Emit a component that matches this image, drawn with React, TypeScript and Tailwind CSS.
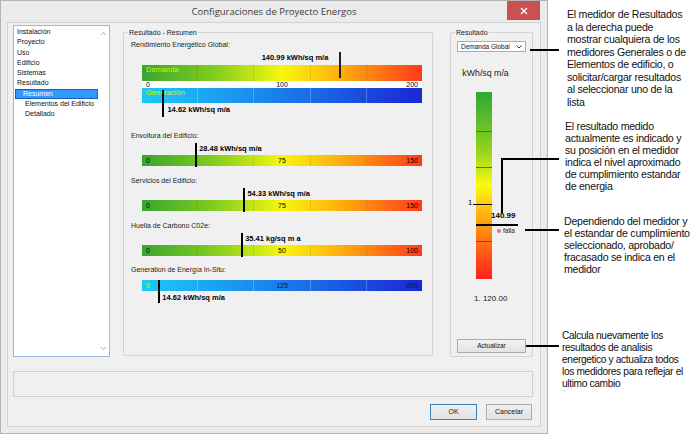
import React from "react";

const warm =
  "bg-[linear-gradient(to_right,#37a52f_0%,#86cf1e_27%,#f6f70f_50%,#ffb20e_70%,#ff3a1b_100%)]";
const cool =
  "bg-[linear-gradient(to_right,#1ccaf6_0%,#1a9cf0_30%,#1a6ce6_60%,#1a3fdc_85%,#1a28d6_100%)]";

function Segments({ light }: { light?: boolean }) {
  const line = light ? "border-[#ffffff40]" : "border-[#00000018]";
  return (
    <div className="absolute inset-0 flex pointer-events-none">
      <div className={"flex-1 border-r " + line} />
      <div className={"flex-1 border-r " + line} />
      <div className={"flex-1 border-r " + line} />
      <div className={"flex-1 border-r " + line} />
      <div className="flex-1" />
    </div>
  );
}

function GroupBox({ label, className, children }: { label: string; className: string; children: React.ReactNode }) {
  return (
    <div className={"relative border border-[#d3d3d3] rounded-[2px] " + className}>
      <span className="absolute -top-[5px] left-[4px] px-[1px] bg-[#f0f0f0] text-[7px] leading-[9px] text-[#222]">
        {label}
      </span>
      {children}
    </div>
  );
}

function SmallMeter({
  label,
  value,
  max,
  unit,
  ticks,
  blue,
  mt,
}: {
  label: string;
  value: number;
  max: number;
  unit: string;
  ticks: [string, string, string];
  blue?: boolean;
  mt: string;
}) {
  const pct = (value / max) * 100;
  const valueText = (
    <div className="h-[13px] text-[7.5px] leading-[13px] font-bold text-black whitespace-nowrap" style={{ paddingLeft: `calc(${pct}% + 4px)` }}>
      {value.toFixed(2)} {unit}
    </div>
  );
  return (
    <div className={mt}>
      <div className="text-[7px] leading-[9px] text-[#222]">{label}</div>
      <div className={"relative ml-[11px] w-[280px] " + (blue ? "mt-[6px]" : "mt-[2px]")}>
        {!blue && valueText}
        <div className={"relative h-[11px] " + (blue ? cool : warm)}>
          <Segments light={blue} />
          <div className="relative grid grid-cols-3 px-[4px] text-[7px] leading-[11px]">
            <span className={blue ? "text-[#d8f200]" : "text-black"}>{ticks[0]}</span>
            <span className={"text-center " + (blue ? "text-[#0d1650]" : "text-black")}>{ticks[1]}</span>
            <span className={"text-right " + (blue ? "text-[#0d1650]" : "text-black")}>{ticks[2]}</span>
          </div>
        </div>
        {blue && valueText}
        <div
          className={"absolute w-[1.5px] bg-black " + (blue ? "top-0 h-[23px]" : "top-[1px] h-[24px]")}
          style={{ left: `${pct}%` }}
        />
      </div>
    </div>
  );
}

function GlobalMeter() {
  const dem = (140.99 / 200) * 100;
  const gen = (14.62 / 200) * 100;
  return (
    <div className="mt-[7px]">
      <div className="text-[7px] leading-[9px] text-[#222]">Rendimiento Energético Global:</div>
      <div className="relative ml-[11px] w-[280px] mt-[3px]">
        <div
          className="h-[13px] text-[7.5px] leading-[11px] font-bold text-black text-right whitespace-nowrap"
          style={{ width: `calc(${dem}% - 11px)` }}
        >
          140.99 kWh/sq m/a
        </div>
        <div className={"relative h-[16px] " + warm}>
          <Segments />
          <div className="relative pl-[4px] text-[7.5px] leading-[10px] text-[#d2f200]">Demanda</div>
        </div>
        <div className="h-[7px] bg-white grid grid-cols-3 px-[4px] text-[7px] leading-[7px] text-black">
          <span>0</span>
          <span className="text-center">100</span>
          <span className="text-right">200</span>
        </div>
        <div className={"relative h-[15px] " + cool}>
          <Segments light />
          <div className="relative pl-[4px] text-[7.5px] leading-[10px] text-[#d2f200]">Generación</div>
        </div>
        <div
          className="h-[13px] text-[7.5px] leading-[14px] font-bold text-black whitespace-nowrap"
          style={{ paddingLeft: `calc(${gen}% + 5px)` }}
        >
          14.62 kWh/sq m/a
        </div>
        <div className="absolute top-0 h-[26px] w-[1.5px] bg-[#222]" style={{ left: `${dem}%` }} />
        <div className="absolute top-[38px] h-[27px] w-[1.5px] bg-black" style={{ left: `${gen}%` }} />
      </div>
    </div>
  );
}

function Chevron({ up }: { up?: boolean }) {
  return (
    <svg width="7" height="5" viewBox="0 0 7 5">
      <path d={up ? "M1 4 L3.5 1.5 L6 4" : "M1 1 L3.5 3.5 L6 1"} fill="none" stroke="#a8a8a8" strokeWidth="1" />
    </svg>
  );
}

function NavList() {
  const top = ["Instalación", "Proyecto", "Uso", "Edificio", "Sistemas", "Resultado"];
  return (
    <div className="w-[97px] h-[332px] bg-white border border-[#9fb8dc] flex">
      <div className="flex-1 pt-[1px] pl-[2px] text-[7px] leading-[10.25px] text-[#111]">
        {top.map((t) => (
          <div key={t} className="pl-[1px]">
            {t}
          </div>
        ))}
        <div className="h-[10px] -ml-[1px] bg-[#3399ff] border border-[#1a5fb4] text-white pl-[7px] leading-[8px]">
          Resumen
        </div>
        <div className="pl-[9px]">Elementos del Edificio</div>
        <div className="pl-[9px]">Detallado</div>
      </div>
      <div className="w-[11px] flex flex-col justify-between items-center pt-[5px] pb-[5px]">
        <Chevron up />
        <Chevron />
      </div>
    </div>
  );
}

function ResultPanel() {
  return (
    <GroupBox label="Resultado" className="w-[83px] h-[325px] mt-[7px] flex flex-col">
      <div className="mx-[6px] mt-[8px] h-[11px] bg-white border border-[#acacac] flex items-center justify-between pl-[3px] pr-[3px]">
        <span className="text-[6.5px] leading-[9px] text-[#111]">Demanda Global</span>
        <svg width="6" height="4" viewBox="0 0 6 4">
          <path d="M0.5 0.5 L3 3 L5.5 0.5" fill="none" stroke="#333" strokeWidth="1" />
        </svg>
      </div>
      <div className="mt-[16px] text-center text-[8.8px] leading-[11px] text-[#222] pr-[12px]">kWh/sq m/a</div>
      <div className="relative mt-[13px] h-[187px]">
        <div className="ml-[25px] w-[16px] h-full relative bg-[linear-gradient(to_bottom,#2ca836_0%,#8ed11f_30%,#f9fa10_50%,#ffbd0f_63%,#ff7a14_78%,#ff1f1f_100%)]">
          <div className="absolute left-0 right-0 top-[39px] h-px bg-[#5a6a20]" />
          <div className="absolute left-0 right-0 top-[75px] h-px bg-[#6a6a18]" />
          <div className="absolute left-0 right-0 top-[149px] h-px bg-[#8a4a18]" />
        </div>
        <span className="absolute left-[17px] top-[107px] text-[7.5px] leading-[8px] text-black">1</span>
        <div className="absolute left-[22px] w-[19px] top-[112px] h-px bg-black" />
        <span className="absolute left-[40px] top-[119px] text-[8px] leading-[9px] font-bold text-black">140.99</span>
        <div className="absolute left-[25px] w-[42px] top-[132px] h-[1.5px] bg-black" />
        <div className="absolute left-[46px] top-[135px] flex items-center gap-[2px]">
          <span className="w-[4px] h-[4px] rounded-full bg-[#f06a78]" />
          <span className="text-[6.5px] leading-[7px] text-[#222]">falla</span>
        </div>
      </div>
      <div className="mt-[15px] ml-[23px] text-[8px] leading-[10px] text-[#222]">1. 120.00</div>
      <div className="mt-auto mb-[3px] mx-[6px] h-[14px] border border-[#adadad] bg-[linear-gradient(to_bottom,#f2f2f2,#e3e3e3)] flex items-center justify-center text-[6.5px] text-[#111]">
        Actualizar
      </div>
    </GroupBox>
  );
}

function Dialog() {
  return (
    <div className="w-[548px] h-[434px] shrink-0 flex flex-col bg-[#ebebeb] border border-[#b4b4b4]">
      <div className="relative h-[21px] flex items-center justify-center">
        <span className="font-['Open_Sans',sans-serif] text-[9.5px] text-[#3c3c3c] pt-[2px]">
          Configuraciones de Proyecto Energos
        </span>
        <div className="absolute top-0 right-[7px] w-[33px] h-[19px] bg-[#c85151] flex items-center justify-center">
          <svg width="8" height="8" viewBox="0 0 8 8">
            <path d="M1 1 L7 7 M7 1 L1 7" stroke="#fff" strokeWidth="1.4" />
          </svg>
        </div>
      </div>
      <div className="flex-1 mx-[6px] mb-[6px] border border-[#d2d2d2] bg-[#f0f0f0] flex flex-col pl-[5px] pr-[7px] pt-[2px]">
        <div className="flex">
          <NavList />
          <GroupBox label="Resultado - Resumen" className="ml-[13px] w-[310px] h-[324px] mt-[7px] pl-[7px]">
            <GlobalMeter />
            <SmallMeter mt="mt-[15px]" label="Envoltura del Edificio:" value={28.48} max={150} unit="kWh/sq m/a" ticks={["0", "75", "150"]} />
            <SmallMeter mt="mt-[10px]" label="Servicios del Edificio:" value={54.33} max={150} unit="kWh/sq m/a" ticks={["0", "75", "150"]} />
            <SmallMeter mt="mt-[10px]" label="Huella de Carbono C02e:" value={35.41} max={100} unit="kg/sq m a" ticks={["0", "50", "100"]} />
            <SmallMeter mt="mt-[9px]" label="Generation de Energía In-Situ:" value={14.62} max={250} unit="kWh/sq m/a" ticks={["0", "125", "250"]} blue />
          </GroupBox>
          <div className="ml-[17px]">
            <ResultPanel />
          </div>
        </div>
        <div className="mt-[14px] h-[26px] border border-[#d0d0d0]" />
        <div className="mt-[7px] flex justify-end gap-[9px] mr-[1px]">
          <div className="w-[47px] h-[16px] border border-[#3c7fb1] bg-[linear-gradient(to_bottom,#f0f0f0,#e2e2e2)] flex items-center justify-center text-[7px] text-[#111]">
            OK
          </div>
          <div className="w-[46px] h-[16px] border border-[#adadad] bg-[linear-gradient(to_bottom,#f0f0f0,#e2e2e2)] flex items-center justify-center text-[7px] text-[#111]">
            Cancelar
          </div>
        </div>
      </div>
    </div>
  );
}

function Notes() {
  return (
    <div className="flex-1 min-w-0 flex flex-col text-[10.6px] leading-[12.5px] text-[#111] tracking-[-0.25px] whitespace-nowrap">
      <p className="mt-[8px] ml-[19px]">
        El medidor de Resultados
        <br />a la derecha puede
        <br />mostrar cualquiera de los
        <br />medidores Generales o de
        <br />Elementos de edificio, o
        <br />solicitar/cargar resultados
        <br />al seleccionar uno de la
        <br />lista
      </p>
      <p className="mt-[12px] ml-[17px] leading-[12px]">
        El resultado medido
        <br />actualmente es indicado y
        <br />su posición en el medidor
        <br />indica el nivel aproximado
        <br />de cumplimiento estandar
        <br />de energia
      </p>
      <p className="mt-[23px] ml-[16px] leading-[12px]">
        Dependiendo del medidor y
        <br />el estandar de cumplimiento
        <br />seleccionado, aprobado/
        <br />fracasado se indica en el
        <br />medidor
      </p>
      <p className="mt-[55px] ml-[14px] leading-[12px] text-[10.2px] tracking-[-0.35px]">
        Calcula nuevamente los
        <br />resultados de analisis
        <br />energetico y actualiza todos
        <br />los medidores para reflejar el
        <br />ultimo cambio
      </p>
      <span className="ml-[15px] text-[7px] leading-[6px]">´</span>
    </div>
  );
}

function Callouts() {
  return (
    <>
      <div className="absolute left-[530px] top-[49px] w-[29px] h-[1.5px] bg-black" />
      <div className="absolute left-[501px] top-[158px] w-[58px] h-[1.5px] bg-black" />
      <div className="absolute left-[501px] top-[158px] w-[1.5px] h-[55px] bg-black" />
      <div className="absolute left-[525px] top-[229px] w-[34px] h-[1.5px] bg-black" />
      <div className="absolute left-[526px] top-[345px] w-[33px] h-[1.5px] bg-black" />
    </>
  );
}

export default function App() {
  return (
    <div className="relative w-[690px] h-[436px] bg-white overflow-hidden flex font-['Liberation_Sans',Arial,sans-serif]">
      <Dialog />
      <Notes />
      <Callouts />
    </div>
  );
}
